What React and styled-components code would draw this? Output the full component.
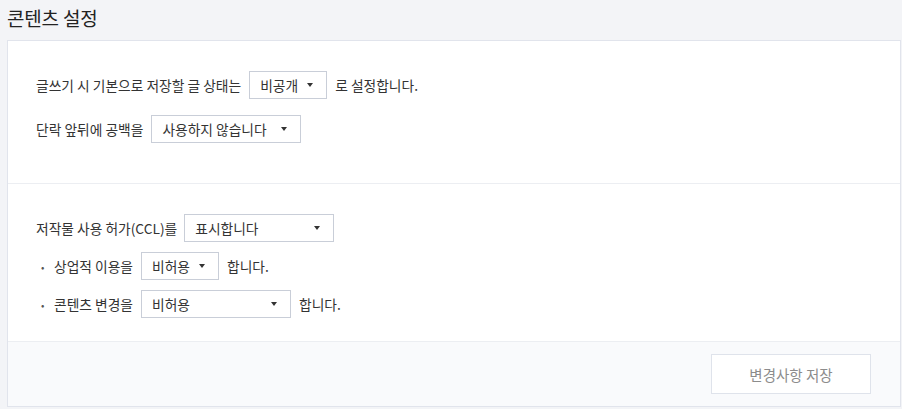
import React from "react";
import styled, { createGlobalStyle } from "styled-components";

const GlobalStyle = createGlobalStyle`
  html, body {
    margin: 0;
    padding: 0;
    background: #f3f4f7;
    font-family: "Noto Sans CJK KR", "Noto Sans", sans-serif;
    color: #333;
  }
`;

const Page = styled.div`
  width: 902px;
  height: 409px;
  padding: 0 1px 0 7px;
  box-sizing: border-box;
`;

const Title = styled.h2`
  margin: 0;
  height: 40px;
  font-size: 19px;
  font-weight: 400;
  line-height: 36px;
  color: #222;
  letter-spacing: -0.2px;
`;

const Panel = styled.div`
  width: 894px;
  box-sizing: border-box;
  border: 1px solid #e1e4ec;
  background: #fff;
`;

const Section = styled.div`
  padding: ${(p) => p.$pad};
  border-top: ${(p) => (p.$divided ? "1px solid #eceef2" : "none")};
  display: flex;
  flex-direction: column;
  gap: ${(p) => p.$gap}px;
`;

const Row = styled.div`
  display: flex;
  align-items: center;
  font-size: 13.75px;
  height: ${(p) => p.$h || 28}px;
  padding-left: ${(p) => (p.$sub ? 5 : 0)}px;
`;

const Bullet = styled.span`
  width: 13px;
  font-size: 10px;
  color: #555;
`;

const Label = styled.span`
  margin-right: ${(p) => p.$gap || 8}px;
  white-space: nowrap;
`;

const Select = styled.div`
  width: ${(p) => p.$w}px;
  height: 28px;
  box-sizing: border-box;
  border: 1px solid #c9ced8;
  background: #fff;
  display: flex;
  align-items: center;
  justify-content: space-between;
  padding: 0 13px 0 10px;
  margin-right: 8px;
  font-size: 13.75px;
  color: #333;
`;

const Caret = styled.span`
  width: 0;
  height: 0;
  border-left: 3.5px solid transparent;
  border-right: 3.5px solid transparent;
  border-top: 4px solid #333;
`;

const Footer = styled.div`
  background: #f9fafc;
  border-top: 1px solid #eceef2;
  height: 64px;
  display: flex;
  align-items: center;
  justify-content: flex-end;
  padding-right: 29px;
`;

const SaveButton = styled.button`
  width: 160px;
  height: 40px;
  border: 1px solid #dfe3eb;
  background: #fff;
  color: #8c8c8c;
  font-family: inherit;
  font-size: 14.5px;
`;

function Dropdown({ width, children }) {
  return (
    <Select $w={width}>
      <span>{children}</span>
      <Caret />
    </Select>
  );
}

export default function App() {
  return (
    <>
      <GlobalStyle />
      <Page>
        <Title>콘텐츠 설정</Title>
        <Panel>
          <Section $pad="30px 28px 40px" $gap={16}>
            <Row>
              <Label>글쓰기 시 기본으로 저장할 글 상태는</Label>
              <Dropdown width={78}>비공개</Dropdown>
              <Label>로 설정합니다.</Label>
            </Row>
            <Row>
              <Label>단락 앞뒤에 공백을</Label>
              <Dropdown width={150}>사용하지 않습니다</Dropdown>
            </Row>
          </Section>
          <Section $divided $pad="30px 28px 23px" $gap={10}>
            <Row>
              <Label $gap={7}>저작물 사용 허가(CCL)를</Label>
              <Dropdown width={150}>표시합니다</Dropdown>
            </Row>
            <Row $sub>
              <Bullet>•</Bullet>
              <Label $gap={8}>상업적 이용을</Label>
              <Dropdown width={78}>비허용</Dropdown>
              <Label>합니다.</Label>
            </Row>
            <Row $sub>
              <Bullet>•</Bullet>
              <Label $gap={8}>콘텐츠 변경을</Label>
              <Dropdown width={150}>비허용</Dropdown>
              <Label>합니다.</Label>
            </Row>
          </Section>
          <Footer>
            <SaveButton>변경사항 저장</SaveButton>
          </Footer>
        </Panel>
      </Page>
    </>
  );
}
